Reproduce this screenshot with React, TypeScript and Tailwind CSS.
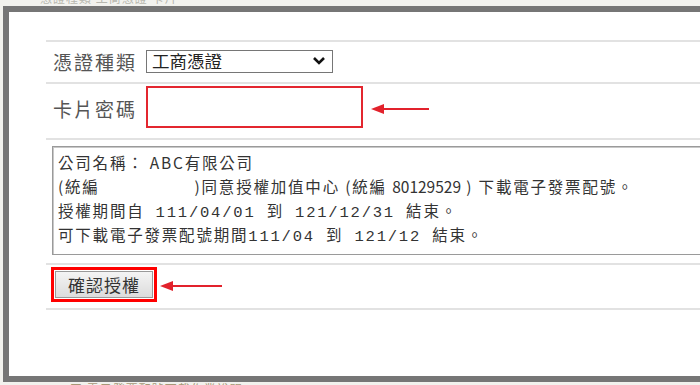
import React from "react";

const cjk = { fontFamily: '"Noto Sans CJK TC", "Noto Sans", sans-serif' };
const mono = { fontFamily: '"Liberation Mono", "Noto Sans CJK TC", monospace', letterSpacing: "1.8px" };

function Arrow({ width }: { width: number }) {
  return (
    <svg width={width} height="12" viewBox={`0 0 ${width} 12`}>
      <line x1="10" y1="6" x2={width} y2="6" stroke="#e2222c" strokeWidth="2" />
      <polygon points="0,6 13,1 13,11" fill="#e2222c" />
    </svg>
  );
}

export default function App() {
  return (
    <div className="w-[700px] h-[385px] bg-[#f2f2ee] overflow-hidden flex flex-col" style={cjk}>
      <div className="h-[6px] overflow-hidden pl-[40px]">
        <div className="text-[12px] leading-[14px] text-[#b8b8b0] -mt-[9px] tracking-[1px] whitespace-nowrap">憑證種類 工商憑證 卡片</div>
      </div>
      <div className="ml-[3px] w-[740px] h-[376px] border-l-[6px] border-t-[6px] border-b-[6px] border-[#767676] bg-white pl-[37px] pt-[28px] flex flex-col">
        <div className="border-t-2 border-[#e2e2e2] h-[42px] flex items-center pl-[7px]">
          <span className="text-[19px] text-[#555] tracking-[2px] leading-none mt-[-2px]">憑證種類</span>
          <div className="ml-[9px] w-[187px] h-[23px] border border-[#767676] flex items-center justify-between pl-[5px] pr-[6px] mt-[-2px]">
            <span className="text-[17.5px] text-[#222] leading-none">工商憑證</span>
            <svg width="14" height="10" viewBox="0 0 14 10">
              <polyline points="2,2 7,7 12,2" fill="none" stroke="#111" strokeWidth="2.6" />
            </svg>
          </div>
        </div>
        <div className="border-t-2 border-[#e2e2e2] h-[56px] pt-[2px] pl-[7px]">
          <div className="h-[42px] flex items-center">
            <span className="text-[19px] text-[#555] tracking-[2px] leading-none mt-[2px]">卡片密碼</span>
            <div className="ml-[9px] w-[217px] h-[42px] border-2 border-[#e3262f] bg-white" />
            <div className="ml-[8px] mt-[4px] flex"><Arrow width={58} /></div>
          </div>
        </div>
        <div className="border-t-2 border-[#e2e2e2] h-[125px] pl-[6px] pt-[6px]">
          <div className="h-[109px] border border-[#9a9a9a] shadow-[inset_1px_1px_0_#c8c8c8] pl-[5px] pt-[3px] text-[15.5px] tracking-[1.8px] text-[#333] whitespace-pre">
            <div className="h-[24px] leading-[24px]">公司名稱： ABC有限公司</div>
            <div className="h-[24px] leading-[24px]">
              {"(統編                  )同意授權加值中心 (統編 "}
              <span className="tracking-normal">80129529</span>
              {" ) 下載電子發票配號。"}
            </div>
            <div className="h-[24px] leading-[24px]">
              授權期間自<span style={mono}>{" 111/04/01 "}</span>到<span style={mono}>{" 121/12/31 "}</span>結束。
            </div>
            <div className="h-[24px] leading-[24px]">
              可下載電子發票配號期間<span style={mono}>{"111/04 "}</span>到<span style={mono}>{" 121/12 "}</span>結束。
            </div>
          </div>
        </div>
        <div className="border-t-2 border-[#e2e2e2] h-[45px] flex items-start pt-[2px] pl-[5px]">
          <div className="w-[106px] h-[35px] border-[3px] border-[#ff0000] p-[1px] flex">
            <div className="flex-1 border border-[#999] bg-gradient-to-b from-[#f4f4f4] to-[#dcdcdc] flex items-center justify-center">
              <span className="text-[17px] text-[#333] tracking-[1px] leading-none">確認授權</span>
            </div>
          </div>
          <div className="ml-[3px] mt-[13px] flex"><Arrow width={62} /></div>
        </div>
        <div className="border-t-2 border-[#e2e2e2]" />
      </div>
      <div className="h-[3px] overflow-hidden pl-[70px]">
        <div className="text-[12px] leading-[14px] text-[#a89878] tracking-[1px] whitespace-nowrap">■ 電子發票配號下載作業說明</div>
      </div>
    </div>
  );
}
